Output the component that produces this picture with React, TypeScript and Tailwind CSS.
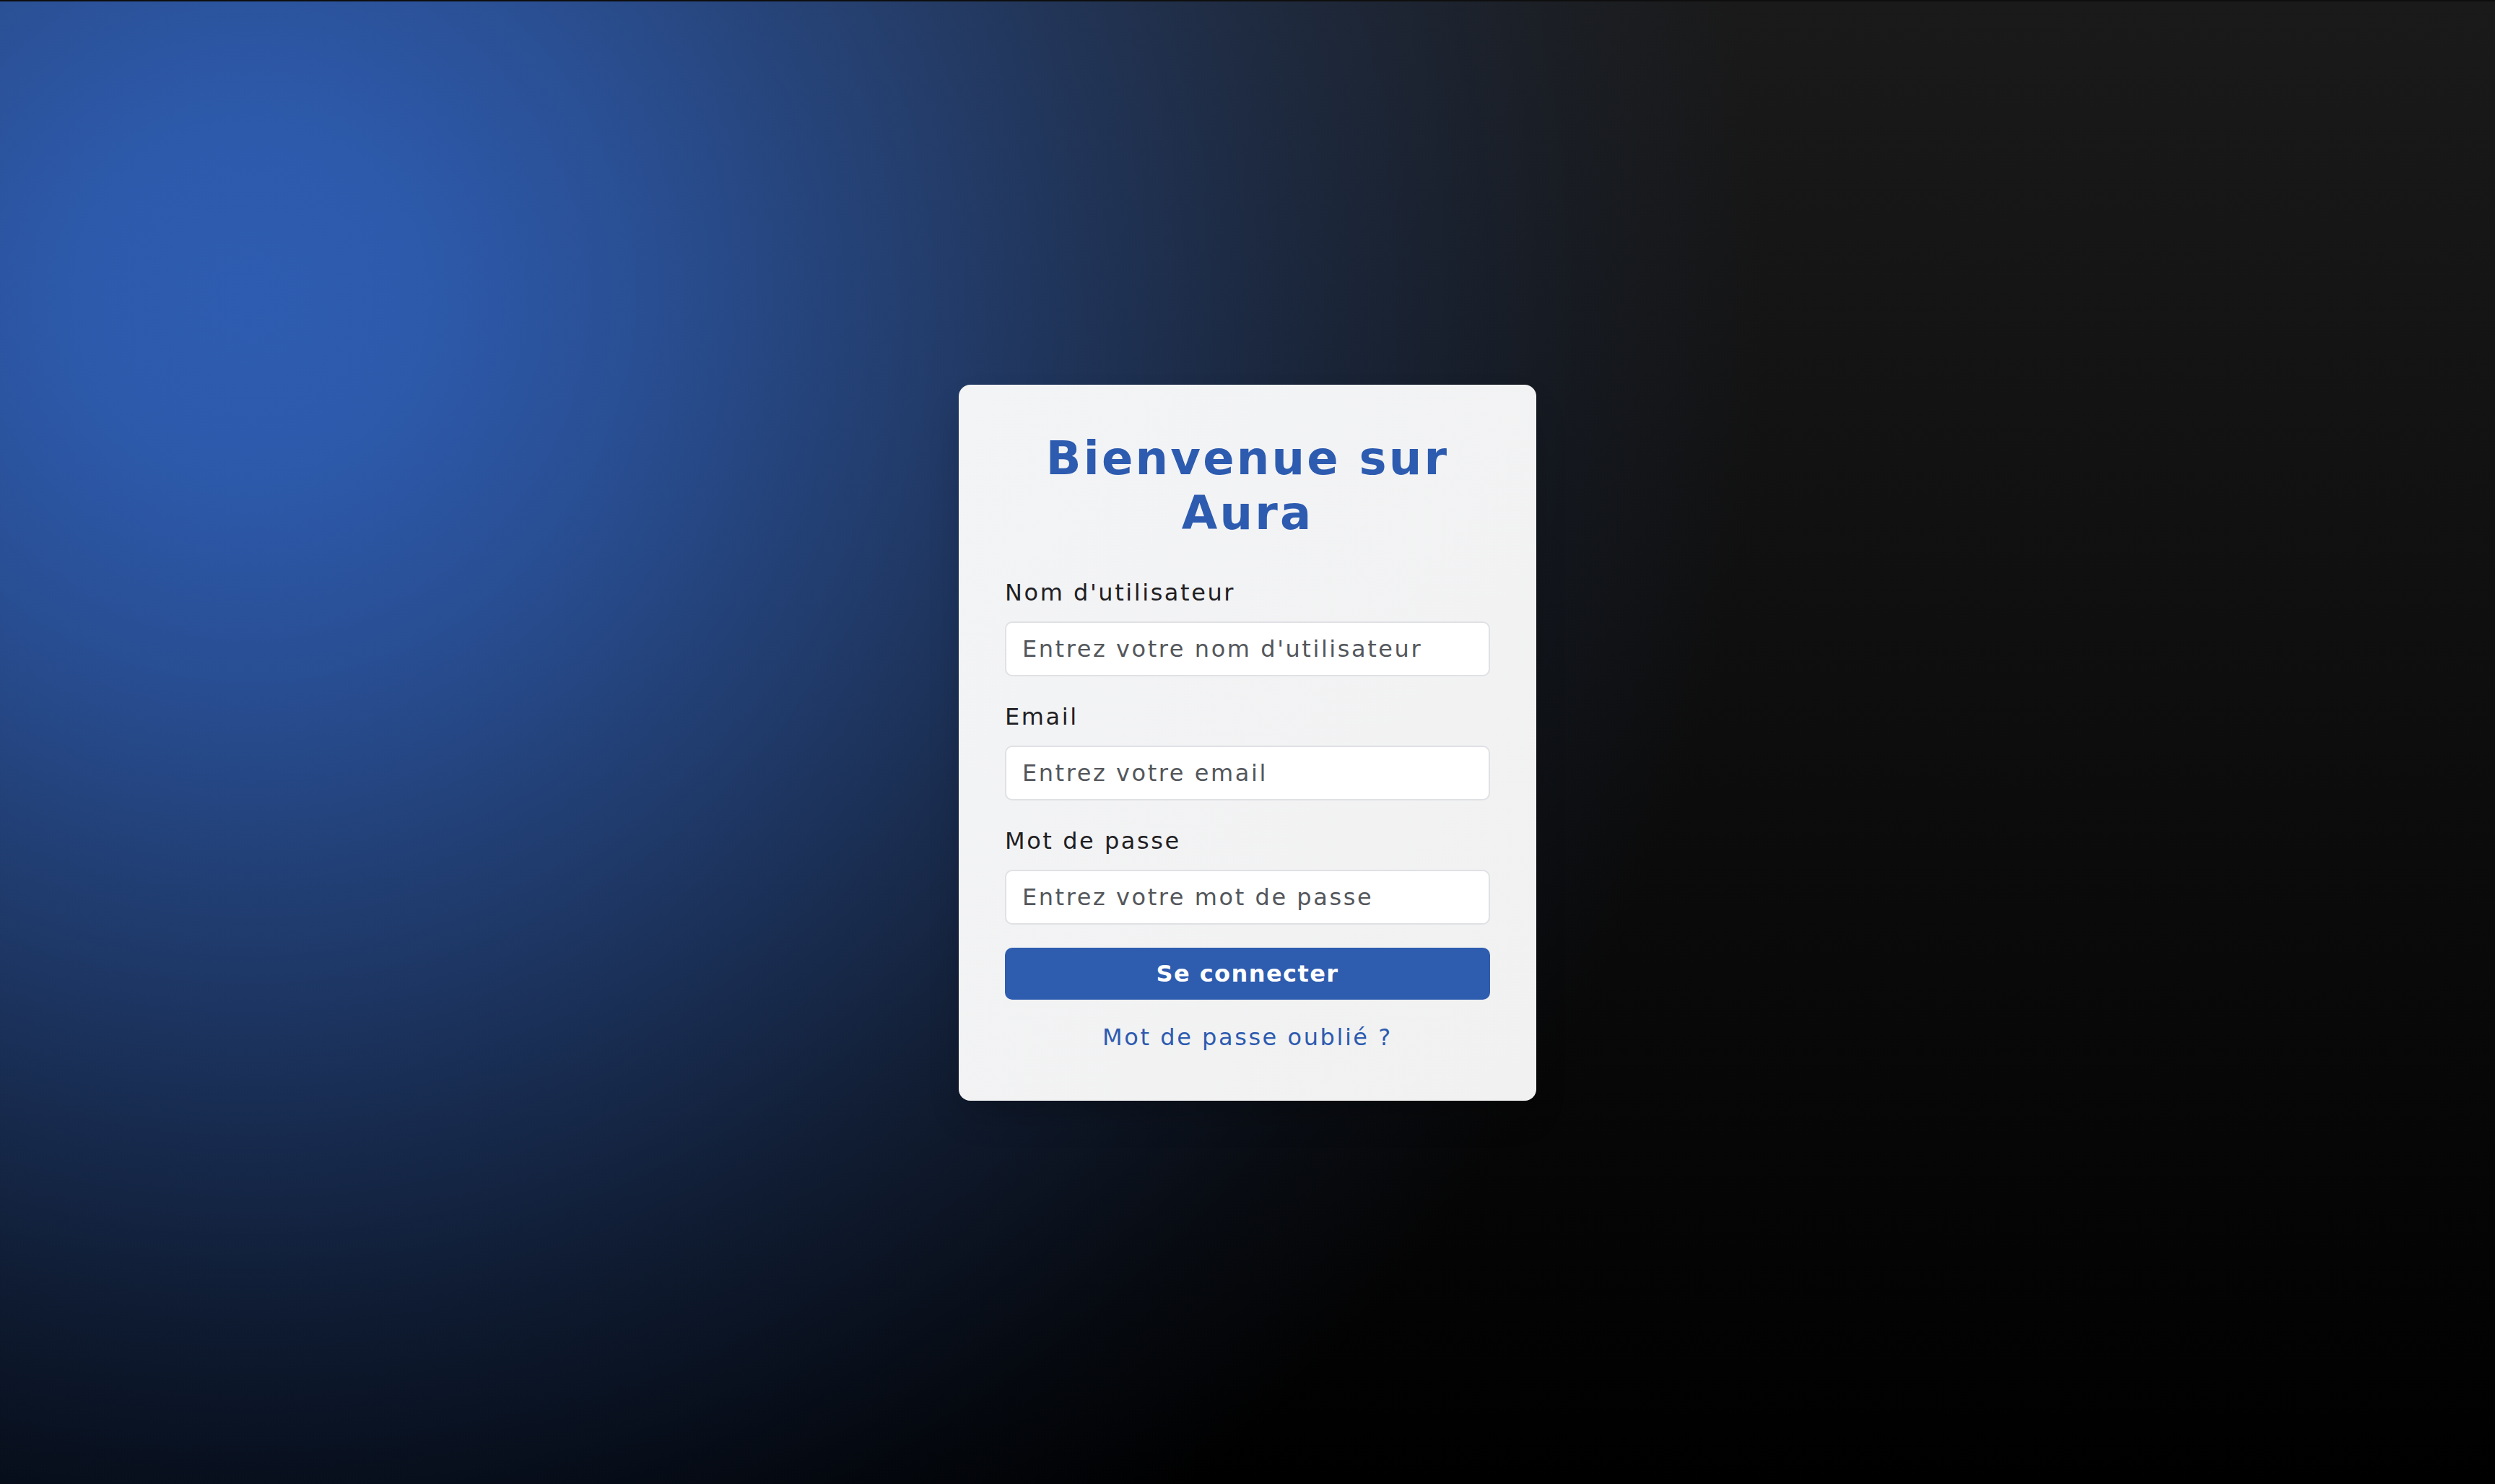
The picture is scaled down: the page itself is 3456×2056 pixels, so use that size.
import { useState } from "react"

const font = { fontFamily: '"DejaVu Sans", "Noto Sans", sans-serif' }

interface FieldProps {
  id: string
  label: string
  type: string
  placeholder: string
}

function Field({ id, label, type, placeholder }: FieldProps) {
  const [value, setValue] = useState("")

  return (
    <div className="mb-8">
      <label
        htmlFor={id}
        className="block mb-4 text-[32px] leading-[48px] tracking-[0.08em] text-[#1f2023]"
      >
        {label}
      </label>
      <input
        id={id}
        type={type}
        value={value}
        onChange={(e) => setValue(e.target.value)}
        placeholder={placeholder}
        className="block w-full h-[76px] px-[22px] rounded-[10px] border-2 border-[#dfe1e5] bg-white text-[32px] tracking-[0.08em] text-[#1f2023] placeholder:text-[#54575c] outline-none"
      />
    </div>
  )
}

export default function App() {
  return (
    <div
      style={font}
      className="w-full h-screen flex items-center justify-center border-t-2 border-[#0e0e0e] bg-[radial-gradient(circle_at_10%_20%,rgba(46,92,176,1)_0px,rgba(46,92,176,0.97)_240px,rgba(46,92,176,0.82)_530px,rgba(46,92,176,0.54)_970px,rgba(46,92,176,0.27)_1410px,rgba(46,92,176,0.07)_1850px,rgba(46,92,176,0)_2100px),linear-gradient(to_bottom,#1a1a1a,#000000)]"
    >
      <div className="w-[800px] p-16 rounded-2xl bg-gradient-to-br from-[#f3f4f6] to-[#f1f1f1] shadow-2xl">
        {/* Title */}
        <h1 className="mb-12 text-center text-[64px] leading-[76px] font-bold tracking-[0.05em] text-[#2d5bb0]">
          Bienvenue sur Aura
        </h1>

        <form onSubmit={(e) => e.preventDefault()}>
          <Field id="username" label="Nom d'utilisateur" type="text" placeholder="Entrez votre nom d'utilisateur" />
          <Field id="email" label="Email" type="email" placeholder="Entrez votre email" />
          <Field id="password" label="Mot de passe" type="password" placeholder="Entrez votre mot de passe" />

          <button
            type="submit"
            className="block w-full h-[72px] mb-7 rounded-[10px] bg-[#2e5caf] text-white text-[32px] font-bold tracking-[0.045em]"
          >
            Se connecter
          </button>
        </form>

        <div className="text-center">
          <a href="#" className="text-[32px] leading-[48px] tracking-[0.08em] text-[#2d5bb0]">
            Mot de passe oublié ?
          </a>
        </div>
      </div>
    </div>
  )
}
